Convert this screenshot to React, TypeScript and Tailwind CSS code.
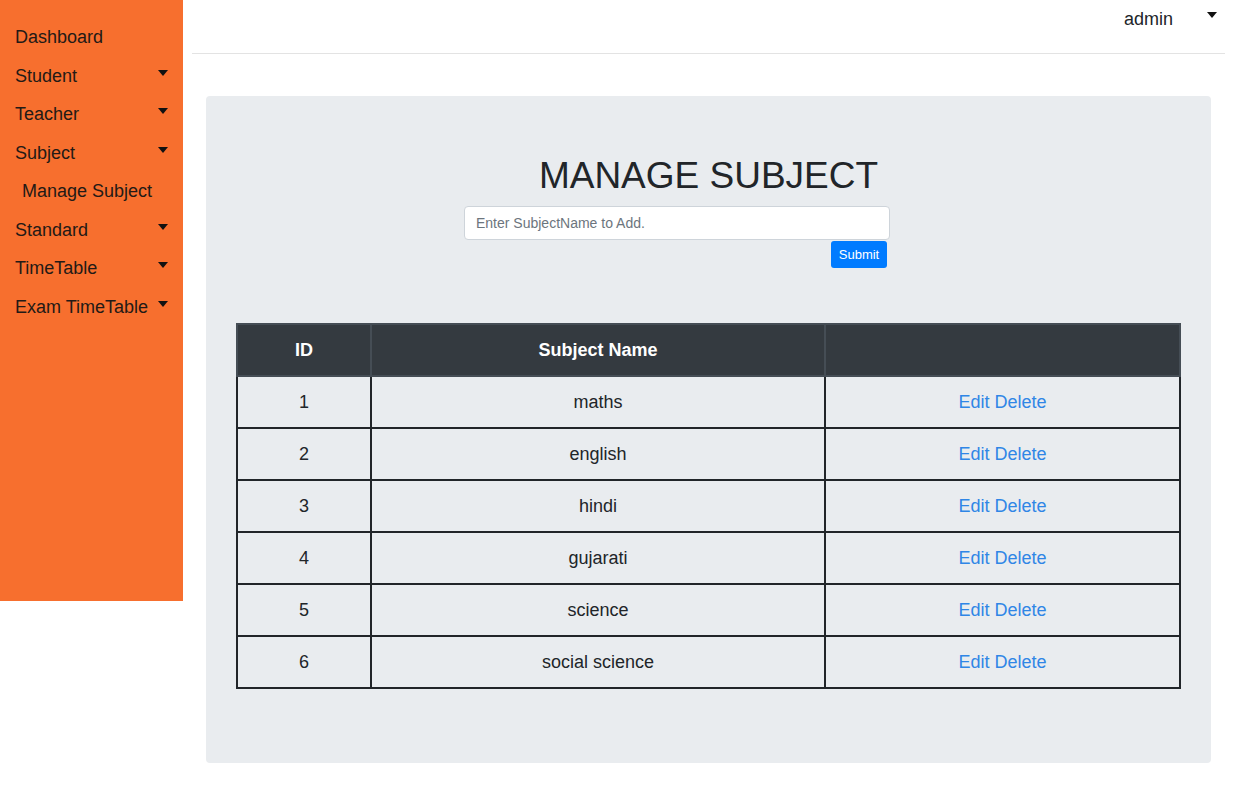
import React from "react";

const menu = [
  { label: "Dashboard", caret: false },
  { label: "Student", caret: true },
  { label: "Teacher", caret: true },
  { label: "Subject", caret: true },
  { label: "Manage Subject", caret: false, sub: true },
  { label: "Standard", caret: true },
  { label: "TimeTable", caret: true },
  { label: "Exam TimeTable", caret: true },
];

const subjects = ["maths", "english", "hindi", "gujarati", "science", "social science"];

const Caret = () => (
  <span className="block w-0 h-0 border-t-[6px] border-t-[#111] border-x-[5px] border-x-transparent" />
);

const App = () => {
  return (
    <div
      className="flex w-[1234px] min-h-[792px] bg-white text-[#212529]"
      style={{ fontFamily: '"Liberation Sans", Arial, sans-serif' }}
    >
      <aside className="w-[183px] h-[601px] bg-[#f76f2e] pt-[18px] shrink-0">
        {menu.map((m) => (
          <div
            key={m.label}
            className={`h-[38.5px] flex items-start justify-between pr-[15px] text-[18px] text-[#231a16] ${m.sub ? "pl-[22px]" : "pl-[15px]"}`}
          >
            <span className="leading-[38.5px]">{m.label}</span>
            {m.caret && (
              <span className="block pt-[13px]">
                <Caret />
              </span>
            )}
          </div>
        ))}
      </aside>

      <main className="flex-1">
        <header className="mx-[9px] h-[54px] border-b border-[#e3e3e3] flex justify-end items-start">
          <span className="text-[18px] mt-[7px] leading-[24px] text-[#212529]">admin</span>
          <span className="block ml-[34px] mr-[8px] mt-[12px]">
            <Caret />
          </span>
        </header>

        <section className="mx-[23px] mt-[42px] h-[667px] bg-[#e9ecef] rounded-[4px] px-[30px] pt-[57px]">
          <h1 className="text-center text-[37px] leading-[46px] text-[#212529]">MANAGE SUBJECT</h1>
          <div className="ml-[228px] w-[426px] mt-[7px] flex flex-col">
            <input
              placeholder="Enter SubjectName to Add."
              className="h-[34px] bg-white border border-[#ced4da] rounded-[4px] px-[11px] text-[14px] text-[#495057] placeholder:text-[#6c757d] outline-none"
            />
            <button className="self-end mr-[3px] mt-[1px] w-[56px] h-[27px] bg-[#007bff] text-white text-[13px] rounded-[3px]">
              Submit
            </button>
          </div>

          <table className="mt-[55px] w-[945px] border-collapse text-[18px]">
            <thead>
              <tr className="bg-[#343a40] text-white font-bold h-[52px]">
                <th className="w-[134px] border-2 border-[#454d55]">ID</th>
                <th className="w-[454px] border-2 border-[#454d55]">Subject Name</th>
                <th className="border-2 border-[#454d55]"></th>
              </tr>
            </thead>
            <tbody>
              {subjects.map((s, i) => (
                <tr key={s} className="h-[52px]">
                  <td className="text-center border-2 border-[#212529]">{i + 1}</td>
                  <td className="text-center border-2 border-[#212529]">{s}</td>
                  <td className="text-center border-2 border-[#212529] text-[#2f86e6]">
                    <a href="#">Edit</a> <a href="#">Delete</a>
                  </td>
                </tr>
              ))}
            </tbody>
          </table>
        </section>
      </main>
    </div>
  );
};

export default App;
